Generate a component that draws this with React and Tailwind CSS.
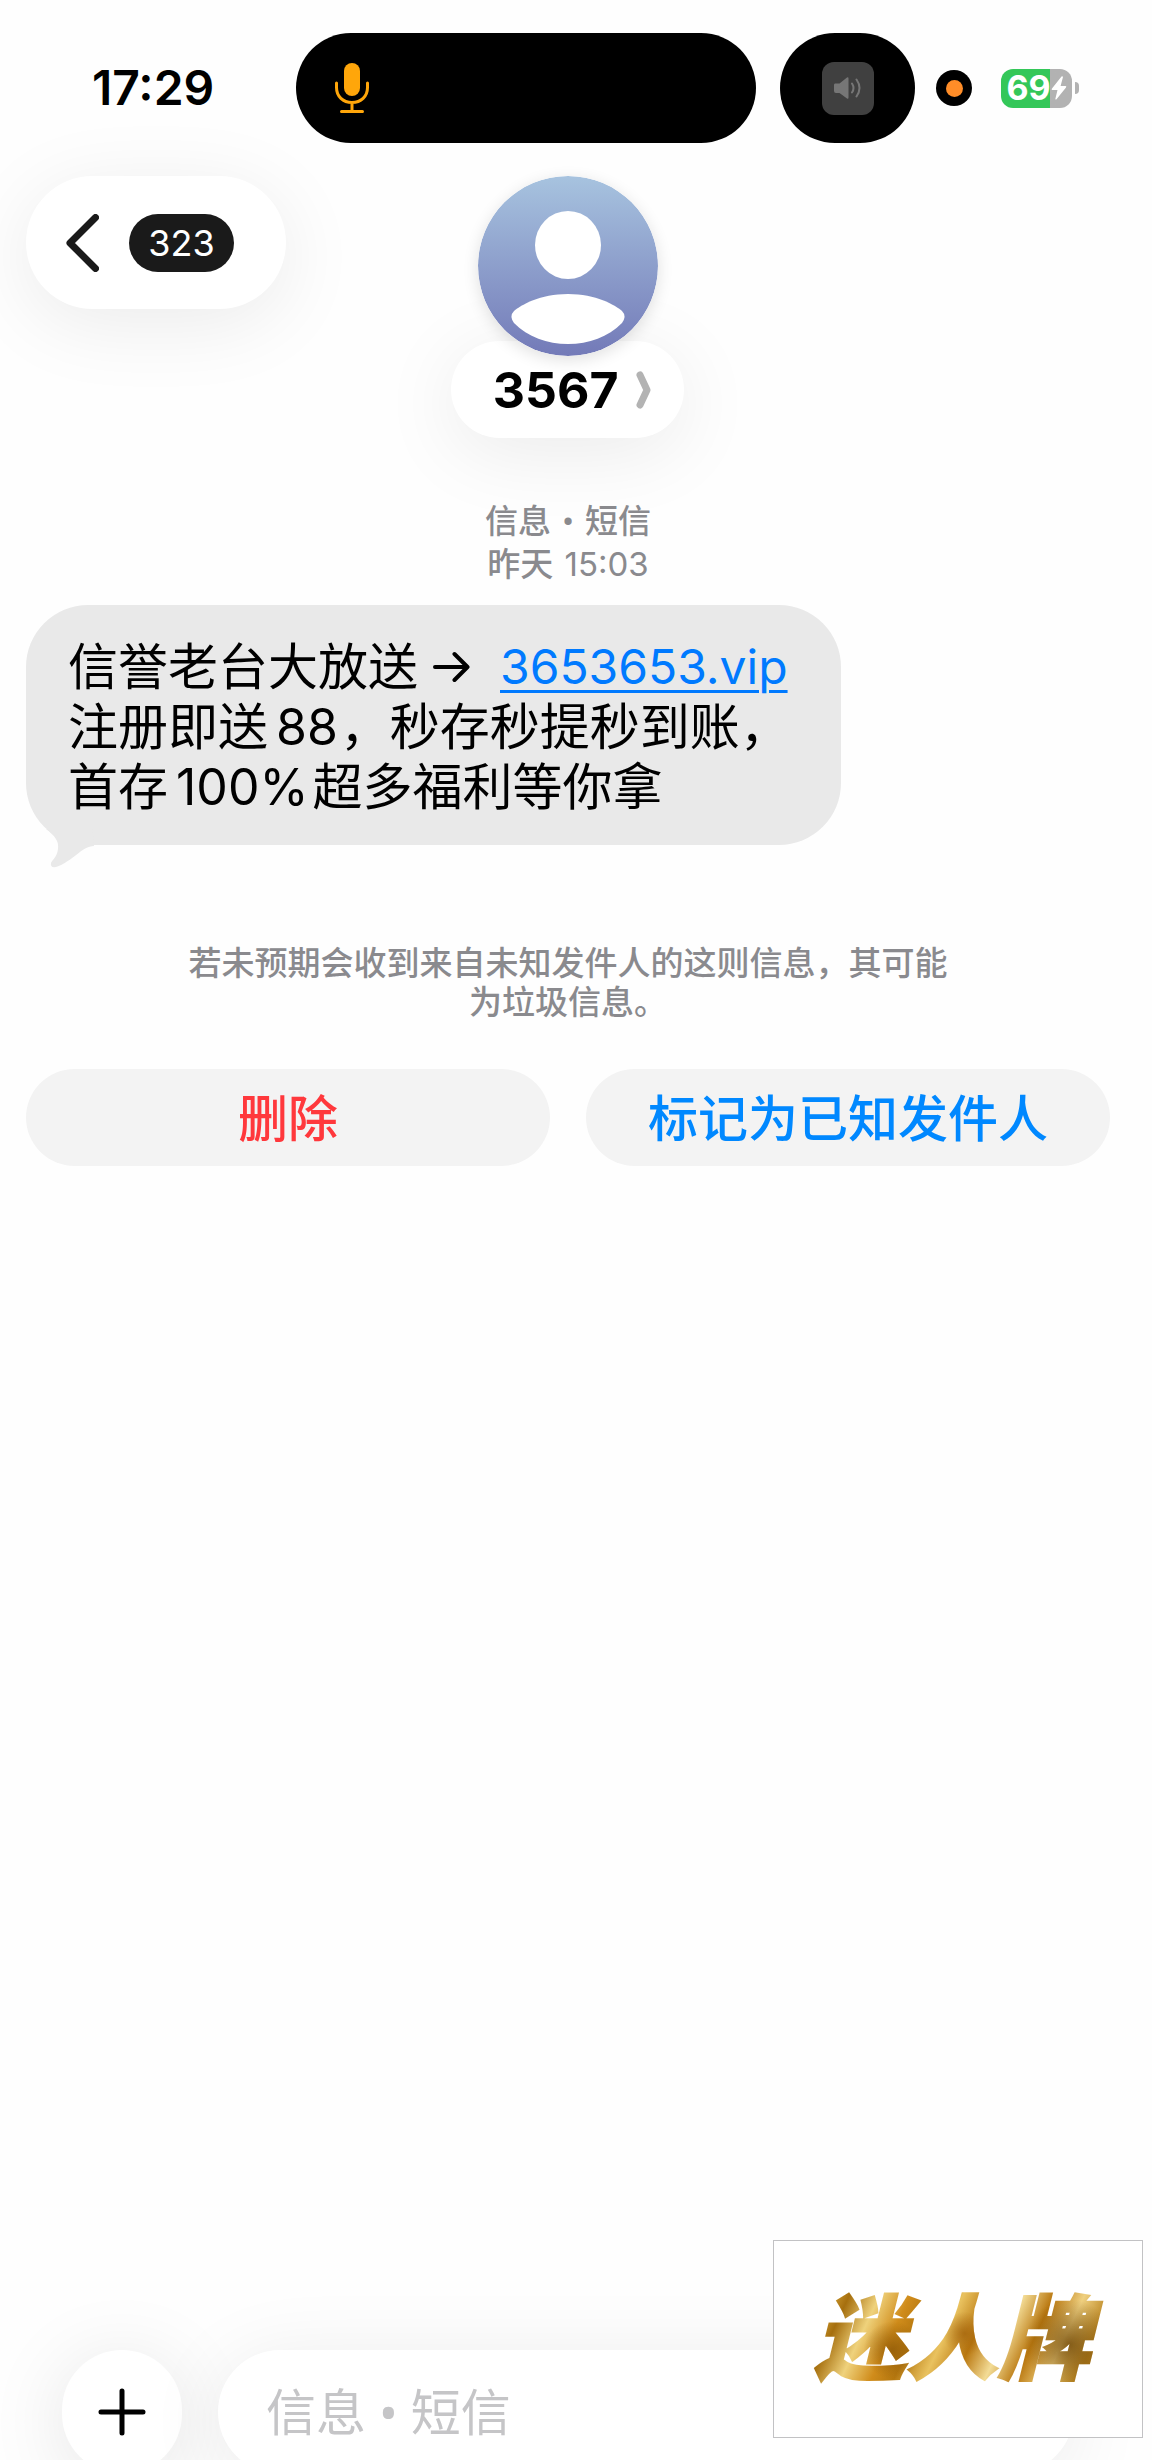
import { useState } from 'react';

function MicIcon({ className }) {
  return (
    <svg className={className} viewBox="0 0 34 51" fill="none" xmlns="http://www.w3.org/2000/svg">
      <rect x="9" y="0" width="16" height="33" rx="8" fill="currentColor" />
      <path
        d="M1.500 20v4.500C1.500 33.500 8 39.500 17 39.500S32.500 33.500 32.500 24.500V20M17 40v8M6.500 48.500h21"
        stroke="currentColor"
        strokeWidth="3"
        strokeLinecap="round"
      />
    </svg>
  );
}

function StatusBar() {
  return (
    <div className="flex items-center pt-[33px] pl-[92px] pr-[57px]">
      <div className="w-[204px] text-[48px] leading-none font-semibold text-black">17:29</div>

      {/* Dynamic island */}
      <div className="flex h-[110px] flex-1 items-center rounded-full bg-black pl-[39px]">
        <MicIcon className="h-[51px] w-[34px] text-[#ffa60a]" />
      </div>
      <div className="ml-6 flex h-[110px] w-[135px] items-center justify-center rounded-[55px] bg-black">
        <div className="flex h-[53px] w-[52px] items-center justify-center rounded-xl bg-[#404040]">
          <svg className="h-[22px] w-[28px] text-[#767676]" viewBox="0 0 28 22" fill="none">
            <path d="M1 6.500h4.500L13 .500q1.500-.8 1.500 1v19q0 1.800-1.500 1L5.500 16H2Q0 16 0 14V8q0-1.500 1-1.500Z" fill="currentColor" />
            <path d="M18 6.500q3 4.500 0 9M22.500 2.500q6 8.500 0 17" stroke="currentColor" strokeWidth="2" strokeLinecap="round" />
          </svg>
        </div>
      </div>

      {/* Recording indicator */}
      <div className="ml-[21px] flex size-9 items-center justify-center rounded-full bg-black">
        <div className="size-[17px] rounded-full bg-[#ff8d28]" />
      </div>

      {/* Battery */}
      <div className="ml-[29px] flex items-center gap-[3px]">
        <div className="flex h-[39px] w-[71px] items-center justify-center overflow-hidden rounded-[12px] bg-linear-to-r from-[#34c759] from-69% to-[#b2b2b2] to-69%">
          <span className="text-[34px] leading-none font-bold text-white">69</span>
          <svg className="h-[24px] w-[16px] shrink-0" viewBox="0 0 16 24">
            <path d="M10.500.500 1 12.600q-.8 1.400.6 1.400h4.900L4.300 23q.4 1 1.200.3L15 11.400q.8-1.400-.6-1.400H9.600L12 1q-.4-1.200-1.500-.5Z" fill="white" />
          </svg>
        </div>
        <div className="h-3 w-1 rounded-r-full bg-[#b2b2b2]" />
      </div>
    </div>
  );
}

function Header() {
  return (
    <header className="grid grid-cols-3 items-start px-[26px] pt-[33px]">
      <button
        aria-label="返回"
        className="flex h-[133px] w-[260px] items-center gap-[30px] rounded-full bg-white pl-10 shadow-[0_14px_80px_rgba(0,0,0,0.08)]"
      >
        <svg className="h-[58px] w-[33px]" viewBox="0 0 33 58" fill="none">
          <path d="M29.500 3.500 4 29l25.500 25.500" stroke="#1a1a1a" strokeWidth="7" strokeLinecap="round" strokeLinejoin="round" />
        </svg>
        <span className="flex h-[58px] w-[105px] items-center justify-center rounded-full bg-[#1a1a1a] text-[36px] leading-none text-white">
          323
        </span>
      </button>

      <div className="flex flex-col items-center">
        <svg className="z-10 size-[180px] rounded-full shadow-[0_4px_16px_rgba(0,0,0,0.12)]" viewBox="0 0 180 180">
          <defs>
            <linearGradient id="avatar" x1="0" y1="0" x2="0" y2="1">
              <stop offset="0" stopColor="#a7c3df" />
              <stop offset="1" stopColor="#737ab8" />
            </linearGradient>
          </defs>
          <circle cx="90" cy="90" r="90" fill="url(#avatar)" />
          <ellipse cx="90" cy="69" rx="33" ry="34" fill="white" />
          <path
            d="M90 118c28 0 47 11 54 17q5 5 0 12c-14 14-33 21-54 21s-40-7-54-21q-5-7 0-12c7-6 26-17 54-17Z"
            fill="white"
          />
        </svg>
        <button className="-mt-[15px] flex h-[97px] w-[233px] items-center justify-end gap-[18px] rounded-full bg-white pr-[33px] shadow-[0_14px_80px_rgba(0,0,0,0.08)]">
          <span className="text-[50px] leading-none font-bold text-black">3567</span>
          <svg className="h-[38px] w-[15px]" viewBox="0 0 15 38" fill="none">
            <path d="M4 4l7 15-7 15" stroke="#b3b3b3" strokeWidth="7" strokeLinecap="round" strokeLinejoin="round" />
          </svg>
        </button>
      </div>
    </header>
  );
}

function Bubble() {
  return (
    <div className="relative mt-5 w-fit rounded-[62px] bg-[#e9e9e9] pt-8 pr-[51px] pb-7 pl-[42px] text-[50px] leading-[60px] text-black">
      <p className="flex items-center">
        信誉老台大放送
        <svg className="mr-[30px] ml-[15px] h-[32px] w-[37px]" viewBox="0 0 37 32" fill="none" role="img" aria-label="→">
          <path d="M2 16h32M21.500 3 34.500 16l-13 13" stroke="black" strokeWidth="4" strokeLinecap="round" strokeLinejoin="round" />
        </svg>
        <a href="#" className="text-[48px] text-[#007aff] underline decoration-[3px] underline-offset-[6px]">3653653.vip</a>
      </p>
      <p>注册即送<span className="mr-[2px] ml-2">88</span>，秒存秒提秒到账，</p>
      <p>首存<span className="mr-1 ml-2">100%</span>超多福利等你拿</p>
      <svg className="absolute top-[221px] left-0 h-[42px] w-[72px]" viewBox="0 0 72 42">
        <path
          d="M20 3C29 10 33 15 32 23C31 31 27 33 25 37Q24 42 30 41C46 36 56 20 68 20L66 0Z"
          fill="#e9e9e9"
        />
      </svg>
    </div>
  );
}

function Composer() {
  const [text, setText] = useState('');

  return (
    <div className="-mb-[14px] flex shrink-0 gap-9 px-[62px]">
      <button
        aria-label="添加"
        className="flex h-[124px] w-[120px] shrink-0 items-center justify-center rounded-full bg-white shadow-[0_10px_80px_rgba(0,0,0,0.10)]"
      >
        <svg className="size-[48px]" viewBox="0 0 48 48">
          <path d="M24 3v42M3 24h42" stroke="black" strokeWidth="5" strokeLinecap="round" />
        </svg>
      </button>
      <div className="flex h-[124px] flex-1 items-center rounded-full bg-white pr-[46px] pl-[48px] shadow-[0_10px_80px_rgba(0,0,0,0.08)]">
        <input
          type="text"
          aria-label="信息 • 短信"
          placeholder="信息 • 短信"
          value={text}
          onChange={(e) => setText(e.target.value)}
          className="min-w-0 flex-1 bg-transparent font-['Noto_Sans','Noto_Sans_CJK_SC',sans-serif] text-[50px] leading-[60px] outline-none placeholder:text-[#c5c5c7]"
        />
        <button aria-label="听写">
          <MicIcon className="h-[54px] w-[36px] text-[#bfbfc4]" />
        </button>
      </div>
    </div>
  );
}

function App() {
  return (
    <div
      lang="zh-CN"
      className="relative flex h-screen flex-col overflow-hidden bg-[#fefefe] pr-4 font-['Inter','Noto_Sans_CJK_SC',sans-serif]"
    >
      <StatusBar />
      <Header />

      <main className="flex-1 px-[26px] pt-[63px]">
        <div className="text-center text-[33px] leading-[42px] text-[#8a8a8e]">
          <p className="font-['Roboto','Noto_Sans_CJK_SC',sans-serif] font-medium">
            信息<span className="mx-[3px]"> • </span>短信
          </p>
          <p><span className="mr-[2px] font-medium">昨天</span> 15:03</p>
        </div>

        <Bubble />

        <p className="mx-auto mt-[99px] max-w-[780px] text-center text-[33px] leading-[39px] font-medium text-[#8a8a8e]">
          若未预期会收到来自未知发件人的这则信息，其可能为垃圾信息。
        </p>

        <div className="mt-[47px] grid grid-cols-2 gap-9 text-[50px] leading-none font-medium">
          <button className="h-[97px] rounded-full bg-[#f3f3f3] pt-[2px] text-[#ff383c]">删除</button>
          <button className="h-[97px] rounded-full bg-[#f3f3f3] pt-[2px] text-[#0088ff]">标记为已知发件人</button>
        </div>
      </main>

      <Composer />

      {/* Watermark */}
      <div className="absolute right-[9px] bottom-[22px] flex h-[198px] w-[370px] items-center justify-center border border-[#c2c2c4] bg-white">
        <span className="bg-[radial-gradient(circle_at_30%_60%,#8f5a08cc_0%,transparent_12%),radial-gradient(circle_at_52%_45%,#a4640ccc_0%,transparent_12%),radial-gradient(circle_at_84%_55%,#6e4606cc_0%,transparent_16%),linear-gradient(115deg,#b07a14_0%,#d9a83a_10%,#a66f0e_16%,#efd27c_24%,#d08c1b_32%,#b5770f_38%,#e9c25f_46%,#b9770f_54%,#f3dc96_62%,#b9770f_70%,#efd080_78%,#b98420_86%,#8f5f0c_100%)] bg-clip-text pr-8 pl-5 text-[92px] leading-[110px] font-black text-transparent italic [-webkit-text-stroke:2px_transparent]">
          迷人牌
        </span>
      </div>
    </div>
  );
}

export default App;
